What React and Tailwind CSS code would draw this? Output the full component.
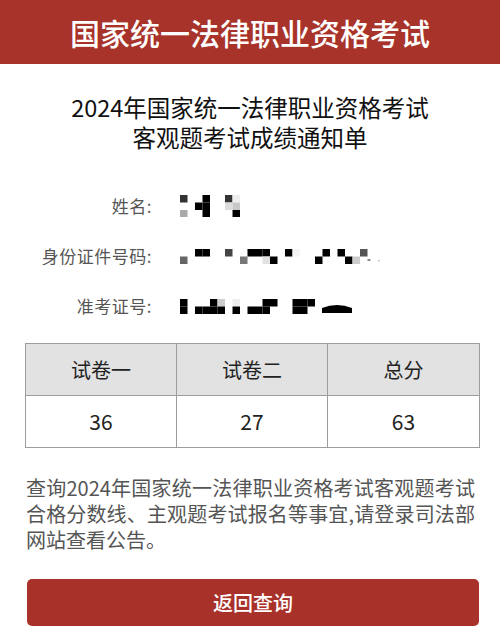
import React from "react";

// mosaic cells: [col, row, colour], 7.5px grid
const CELL = 7.5;

const nameCells = [
  [0, 0, "#333"], [0, 2, "#aaa"],
  [2, 1, "#000"], [3, 0, "#000"], [3, 1, "#000"], [3, 2, "#000"],
  [6, 0, "#333"], [7, 0, "#eee"], [6, 1, "#ddd"], [7, 1, "#c8c8c8"], [7, 2, "#000"],
];

const idCells = [
  [0, 1, "#666"],
  [2, 0, "#000"], [3, 0, "#000"],
  [6, 0, "#444"],
  [8, 1, "#777"],
  [9, 0, "#000"], [10, 0, "#000"], [11, 0, "#000"],
  [11, 1, "#e2e2e2"], [12, 1, "#000"],
  [14, 0, "#000"], [15, 0, "#f4f4f4"],
  [18, 1, "#000"], [19, 0, "#000"],
  [21, 0, "#000"], [22, 1, "#000"], [23, 1, "#ccc"], [24, 0, "#555"],
];

const examCells = [
  [0, 0, "#000"], [0, 1, "#000"],
  [2, 1, "#000"], [3, 1, "#000"], [4, 0, "#000"], [4, 1, "#000"], [5, 0, "#ccc"], [5, 1, "#000"],
  [7, 0, "#eee"], [7, 1, "#000"],
  [9, 1, "#000"], [10, 1, "#000"], [11, 1, "#000"], [11, 0, "#000"], [12, 0, "#000"],
  [15, 0, "#000"], [16, 0, "#000"], [17, 0, "#000"], [15, 1, "#000"], [16, 1, "#000"],
];

const Mosaic = ({ cells, rows, extra }) => (
  <svg width={200} height={rows * CELL} viewBox={`0 0 200 ${rows * CELL}`} className="block">
    {cells.map(([c, r, fill], i) => (
      <rect key={i} x={c * CELL} y={r * CELL} width={CELL} height={CELL} fill={fill} />
    ))}
    {extra}
  </svg>
);

const InfoRow = ({ label, children }) => (
  <div className="flex items-center h-[50px]">
    <div className="w-[126px] text-right text-[17px] text-[#555] tracking-[0.5px]">{label}:</div>
    <div className="pl-[28px]">{children}</div>
  </div>
);

const cell = "flex items-center justify-center border-[#9d9d9d]";

export default function App() {
  const font = { fontFamily: '"Noto Sans CJK SC", "Noto Sans", sans-serif' };
  return (
    <div className="w-[500px] h-[642px] bg-white overflow-hidden" style={font}>
      <div className="h-[64px] bg-[#a8332a] flex items-center justify-center">
        <h1 className="text-white text-[30px] font-medium">国家统一法律职业资格考试</h1>
      </div>

      <div className="mt-[28px] text-center text-[#111] text-[23.5px] leading-[30px]">
        <div>2024年国家统一法律职业资格考试</div>
        <div>客观题考试成绩通知单</div>
      </div>

      <div className="mt-[29px] pl-[26px]">
        <InfoRow label="姓名">
          <Mosaic cells={nameCells} rows={3} />
        </InfoRow>
        <InfoRow label="身份证件号码">
          <Mosaic
            cells={idCells}
            rows={2}
            extra={
              <>
                <rect x={25 * CELL} y={10} width={3} height={2} fill="#888" />
                <rect x={26 * CELL + 3} y={11} width={1.5} height={1.5} fill="#bbb" />
              </>
            }
          />
        </InfoRow>
        <InfoRow label="准考证号">
          <Mosaic
            cells={examCells}
            rows={2}
            extra={<path d="M142 9 Q157 3 172 9 L172 14 L142 14 Z" fill="#000" />}
          />
        </InfoRow>
      </div>

      <div className="pl-[25px] pr-[20px] mt-[12px]">
        <div className="grid grid-cols-3 border-[1.5px] border-[#9d9d9d] text-[#222]">
          <div className={`${cell} h-[52px] bg-[#e2e2e2] text-[20px] border-r-[1.5px] border-b-[1.5px]`}>试卷一</div>
          <div className={`${cell} h-[52px] bg-[#e2e2e2] text-[20px] border-r-[1.5px] border-b-[1.5px]`}>试卷二</div>
          <div className={`${cell} h-[52px] bg-[#e2e2e2] text-[20px] border-b-[1.5px]`}>总分</div>
          <div className={`${cell} h-[51px] text-[21px] border-r-[1.5px]`}>36</div>
          <div className={`${cell} h-[51px] text-[21px] border-r-[1.5px]`}>27</div>
          <div className={`${cell} h-[51px] text-[21px]`}>63</div>
        </div>
      </div>

      <div className="mt-[27px] pl-[26px] pr-[25px] text-[20px] leading-[26px] text-[#555]">
        <div className="whitespace-nowrap text-justify [text-align-last:justify]">
          查询2024年国家统一法律职业资格考试客观题考试
        </div>
        <div className="whitespace-nowrap text-justify [text-align-last:justify]">
          合格分数线、主观题考试报名等事宜,请登录司法部
        </div>
        <div>网站查看公告。</div>
      </div>

      <div className="mt-[26px] pl-[27px] pr-[21px]">
        <button className="w-full h-[47px] rounded-[5px] bg-[#a8322a] text-white text-[20px] font-medium flex items-center justify-center">
          返回查询
        </button>
      </div>
    </div>
  );
}
